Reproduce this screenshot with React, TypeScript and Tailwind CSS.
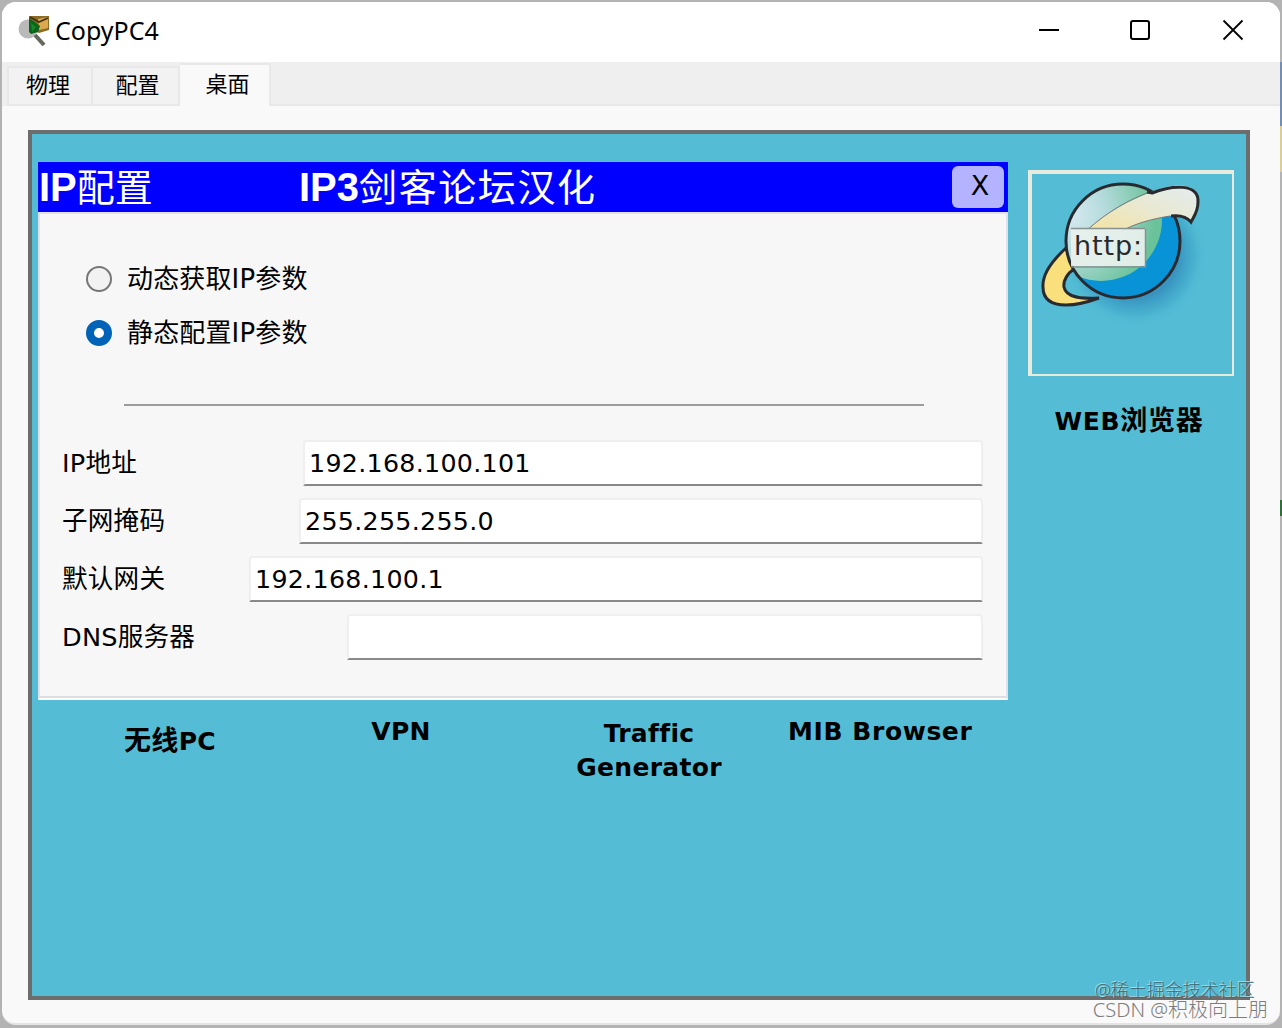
import { useState } from "react";

type Field = {
	label: string;
	value: string;
	width: string;
};

const fields: Field[] = [
	{ label: "IP地址", value: "192.168.100.101", width: "w-[680px]" },
	{ label: "子网掩码", value: "255.255.255.0", width: "w-[684px]" },
	{ label: "默认网关", value: "192.168.100.1", width: "w-[734px]" },
	{ label: "DNS服务器", value: "", width: "w-[636px]" },
];

const modes = ["动态获取IP参数", "静态配置IP参数"];

function AppIcon() {
	return (
		<svg className="h-8 w-8" viewBox="0 0 32 32">
			<ellipse cx="10" cy="14" rx="9.5" ry="9.5" fill="#b9b9b9" />
			<path d="M17 20l9 10" stroke="#66675c" strokeWidth="4" />
			<path d="M11 1h20v14l-10 3-10-4z" fill="#8b6b25" />
			<path d="M20 4l10-2v11l-9 2z" fill="#dda94e" />
			<path d="M12 2l9 5 9-4" fill="none" stroke="#3f3210" strokeWidth="1.6" />
			<path d="M11 3l11 8-2 6-7 2-2-2z" fill="#0b641b" />
			<path d="M13 8l5 4-4 5z" fill="#16852b" />
		</svg>
	);
}

function TitleBar() {
	return (
		<div className="flex h-[60px] items-center bg-white pb-0.5 pl-4">
			<AppIcon />
			<h1 className="mb-0.5 ml-[5px] font-['Noto_Sans',sans-serif] text-[25px] leading-none whitespace-nowrap text-black">
				CopyPC4
			</h1>
			<div className="mr-[36px] mb-[2px] ml-auto flex items-center gap-[70px]">
				<button type="button" aria-label="Minimize">
					<svg className="h-[22px] w-[22px]" viewBox="0 0 22 22">
						<path d="M1 11h20" stroke="#000" strokeWidth="2" />
					</svg>
				</button>
				<button type="button" aria-label="Maximize" className="-ml-px mr-px">
					<svg className="h-[22px] w-[22px]" viewBox="0 0 22 22">
						<rect x="2" y="2" width="18" height="18" rx="2" fill="none" stroke="#000" strokeWidth="2" />
					</svg>
				</button>
				<button type="button" aria-label="Close">
					<svg className="h-[22px] w-[22px]" viewBox="0 0 22 22">
						<path d="M1.5 1.5l19 19M20.5 1.5l-19 19" stroke="#000" strokeWidth="1.8" />
					</svg>
				</button>
			</div>
		</div>
	);
}

function Tabs() {
	return (
		<div className="flex h-[44px] items-end bg-[#efefef] pl-[5px] text-[22px] leading-none text-black">
			<button type="button" className="h-10 w-[84px] border-2 border-r-0 border-[#e8e8e8] bg-[#f2f2f2] pr-1">
				物理
			</button>
			<button type="button" className="h-10 w-[89px] border-2 border-[#e8e8e8] bg-[#f2f2f2] pl-1">
				配置
			</button>
			<button
				type="button"
				className="h-[43px] w-[91px] border-t-2 border-r-2 border-[#e8e8e8] bg-[#f9f9f9] pb-0.5 pl-1.5"
			>
				桌面
			</button>
			<div className="h-0.5 grow bg-[#e8e8e8]" />
		</div>
	);
}

function BrowserIcon() {
	return (
		<svg className="h-[200px] w-[200px]" viewBox="0 0 200 200">
			<defs>
				<radialGradient id="globe" cx="0.2" cy="0.45" r="0.75">
					<stop offset="0" stopColor="#dcecf3" />
					<stop offset="0.45" stopColor="#b4dbdc" />
					<stop offset="1" stopColor="#6ac299" />
				</radialGradient>
				<linearGradient id="ring" x1="0" y1="1" x2="1" y2="0">
					<stop offset="0" stopColor="#f3e3a0" />
					<stop offset="0.5" stopColor="#eae8cf" />
					<stop offset="1" stopColor="#e2edf0" />
				</linearGradient>
				<radialGradient id="shade">
					<stop offset="0.6" stopColor="#2a7fb4" stopOpacity="0.65" />
					<stop offset="0.8" stopColor="#2a8fbf" stopOpacity="0.3" />
					<stop offset="1" stopColor="#54bdd5" stopOpacity="0" />
				</radialGradient>
				<clipPath id="disc">
					<circle cx="91" cy="67" r="57" />
				</clipPath>
			</defs>
			<circle cx="103" cy="81" r="73" fill="url(#shade)" />
			<path
				d="M34 74C22 85 10 99 11 113c0 13 9 18 23 18 11 0 22-3 33-7-17 1-33 0-35-11-1-7 4-14 10-18z"
				fill="#fadf7d"
				stroke="#292a2f"
				strokeWidth="3"
			/>
			<circle cx="91" cy="67" r="57" fill="#0793d5" />
			<g clipPath="url(#disc)">
				<circle cx="69" cy="46" r="61" fill="url(#globe)" />
			</g>
			<circle cx="91" cy="67" r="57" fill="none" stroke="#292a2f" strokeWidth="3" />
			<path
				d="M54 57C76 37 100 26 119 18c22-9 48-11 47 10 0 10-4 14-7 20-5-6-12-7-21-6-19 3-37 8-48 15z"
				fill="url(#ring)"
			/>
			<path d="M54 57C76 37 97 26 115 19M90 57c12-7 29-12 48-15" fill="none" stroke="#777" strokeWidth="1" />
			<path
				d="M115 18l5 1c20-8 47-10 46 9 0 10-4 14-7 20-5-6-12-7-20-6"
				fill="none"
				stroke="#292a2f"
				strokeWidth="3"
			/>
			<path d="M39 55h74v37H39z" fill="#e8f0ec" fillOpacity="0.94" />
			<path d="M39 54.5h74M39 93h75M113.5 55v38" stroke="#879192" strokeWidth="1.5" />
			<text x="42" y="81" fontSize="27" textLength="68" fill="#252b2e" fontFamily="DejaVu Sans, sans-serif">
				http:
			</text>
		</svg>
	);
}

function IpConfig() {
	const [mode, setMode] = useState(1);
	const [values, setValues] = useState(fields.map((field) => field.value));

	const onChangeHandler = (index: number, value: string) => {
		setValues(values.map((item, i) => (i === index ? value : item)));
	};

	return (
		<section className="h-[538px] bg-[#f7f7f7]">
			<header className="flex h-[50px] items-center bg-[#0000ff] pr-1 pl-px font-['Liberation_Sans','Noto_Sans_CJK_SC',sans-serif] text-[40px] leading-[50px] whitespace-nowrap text-white">
				<h2 className="w-[260px]">
					<span className="font-bold">IP</span>
					<span className="text-[38px]">配置</span>
				</h2>
				<h2>
					<span className="font-bold">IP3</span>
					<span className="text-[38px] tracking-[1.6px]">剑客论坛汉化</span>
				</h2>
				<button
					type="button"
					className="ml-auto h-[42px] w-[52px] rounded-md bg-[#b3b3ff] pb-1 pl-1 font-['DejaVu_Sans',sans-serif] text-[27px] leading-none text-black"
				>
					X
				</button>
			</header>
			<div className="h-[488px] border-2 border-[#e2e0e8] border-b-white pr-[23px] pl-[22px] pt-[38px] shadow-[inset_0_-2px_0_#dedee2]">
				<div className="pl-6">
					{modes.map((item, index) => (
						<label key={item} className="flex h-[54px] items-center whitespace-nowrap">
							<input
								type="radio"
								className="peer sr-only"
								checked={mode === index}
								onChange={() => setMode(index)}
							/>
							<span className="mr-[15px] h-[26px] w-[26px] rounded-full border-2 border-[#777] bg-[#f2f2f2] peer-checked:border-8 peer-checked:border-[#0063b8] peer-checked:bg-white" />
							<span className="tracking-[0.15px]">{item}</span>
						</label>
					))}
				</div>
				<hr className="mt-[44px] mr-[59px] ml-[62px] border-t-2 border-[#9c9c9c]" />
				<div className="mt-[34px] flex flex-col gap-3">
					{fields.map((field, index) => (
						<label key={field.label} className="flex h-[46px] items-center justify-between whitespace-nowrap">
							<span className="pt-0.5 text-[25.6px] tracking-[0.2px]">{field.label}</span>
							<input
								className={`${field.width} h-[46px] rounded-t-sm border-2 border-[#efefef] border-b-[#898989] bg-white pl-1 text-[25.3px] tracking-[0.3px] outline-none`}
								value={values[index]}
								onChange={(event) => onChangeHandler(index, event.target.value)}
							/>
						</label>
					))}
				</div>
			</div>
		</section>
	);
}

function Desktop() {
	return (
		<main className="mt-6 mr-[30px] ml-[26px] flex h-[870px] border-4 border-[#6d6d6d] bg-[#54bdd5] pl-1.5">
			<div className="w-[970px] pt-7">
				<IpConfig />
				<div className="grid grid-cols-[264px_198px_298px_164px] pt-[15px] text-center text-[25px] leading-[34px] font-bold tracking-[0.3px] whitespace-nowrap">
					<p className="pt-[9px]">
						<span className="text-[27px]">无线</span>PC
					</p>
					<p>VPN</p>
					<p className="pt-0.5">
						Traffic
						<br />
						Generator
					</p>
					<p className="-ml-2.5 tracking-[0.6px]">MIB Browser</p>
				</div>
			</div>
			<div className="ml-5 w-[206px] pt-9">
				<button type="button" className="block h-[206px] w-[206px] border-2 border-t-4 border-l-4 border-[#e9ebdf]">
					<BrowserIcon />
				</button>
				<p className="mt-7 -ml-1 text-center text-[25px] leading-[34px] font-bold tracking-[0.7px] whitespace-nowrap">
					WEB<span className="text-[27px]">浏览器</span>
				</p>
			</div>
		</main>
	);
}

export default function App() {
	return (
		<div className="relative h-[1028px] w-[1282px] overflow-hidden bg-[#b3b3b3] bg-[linear-gradient(#b3b3b3_62px,#6f8fb5_62px,#6f8fb5_126px,#d9cf95_126px,#d9cf95_172px,#b3b3b3_172px,#b3b3b3_500px,#2f7036_500px,#2f7036_516px,#b3b3b3_516px)] bg-[length:2px_100%] bg-right bg-no-repeat p-0.5 font-['DejaVu_Sans','Noto_Sans_CJK_SC',sans-serif] text-[26px] leading-none text-black">
			<div className="h-[1023px] overflow-hidden rounded-[14px] border-b-2 border-[#e4e4e4] bg-[#f9f9f9]">
				<TitleBar />
				<Tabs />
				<Desktop />
			</div>
			<div className="pointer-events-none absolute right-[14px] bottom-[8px] text-right font-['Noto_Sans','Noto_Sans_CJK_SC',sans-serif] font-light whitespace-nowrap">
				<p className="mr-[13px] text-[18px] leading-5 text-[#3f6a73] [text-shadow:-1px_-1px_0_#a8dce6]">@稀土掘金技术社区</p>
				<p className="text-[20px] leading-5 text-[#7c7c7c]">CSDN @积极向上朋</p>
			</div>
		</div>
	);
}
